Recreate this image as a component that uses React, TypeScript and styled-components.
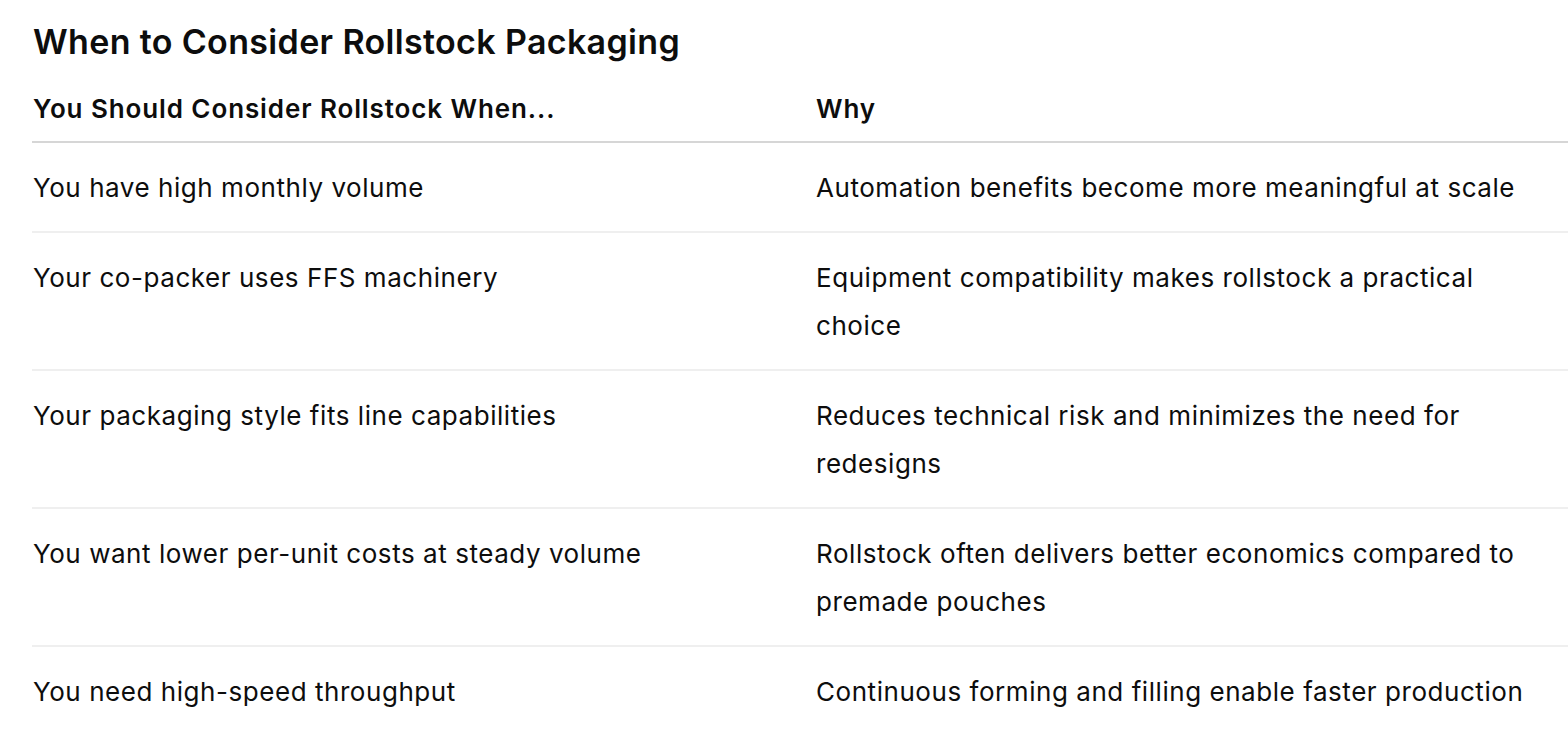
import React from "react";
import styled, { createGlobalStyle } from "styled-components";

const GlobalStyle = createGlobalStyle`
  html, body {
    margin: 0;
    padding: 0;
    background: #ffffff;
  }

  body {
    font-family: Inter, "Noto Sans", "Liberation Sans", sans-serif;
    color: #0d0d0d;
    overflow: hidden;
  }
`;

const StyledPage = styled.main`
  width: 1568px;
  height: 732px;
  overflow: hidden;
  padding: 18px 0 0 32px;
  box-sizing: border-box;
`;

const StyledTitle = styled.h2`
  margin: 0;
  padding-left: 1px;
  font-size: 34px;
  line-height: 48px;
  font-weight: 600;
  letter-spacing: 0.35px;
`;

const StyledTable = styled.table`
  width: 1600px;
  border-collapse: collapse;
  table-layout: fixed;
`;

const StyledHeadCell = styled.th<{ $width?: string }>`
  width: ${(p) => p.$width || "auto"};
  padding: 19px 0 8px 1px;
  text-align: left;
  font-size: 26px;
  line-height: 48px;
  font-weight: 600;
  letter-spacing: 0.9px;
  border-bottom: 2px solid #d6d6d6;
`;

const StyledRow = styled.tr`
  border-bottom: 2px solid #efefef;

  &:last-child {
    border-bottom: none;
  }
`;

const StyledCell = styled.td`
  padding: 21px 88px 19px 1px;
  font-size: 26px;
  line-height: 48px;
  font-weight: 400;
  letter-spacing: 0.55px;
  vertical-align: top;
`;

const rows = [
  {
    when: "You have high monthly volume",
    why: "Automation benefits become more meaningful at scale",
  },
  {
    when: "Your co-packer uses FFS machinery",
    why: "Equipment compatibility makes rollstock a practical choice",
  },
  {
    when: "Your packaging style fits line capabilities",
    why: "Reduces technical risk and minimizes the need for redesigns",
  },
  {
    when: "You want lower per-unit costs at steady volume",
    why: "Rollstock often delivers better economics compared to premade pouches",
  },
  {
    when: "You need high-speed throughput",
    why: "Continuous forming and filling enable faster production",
  },
];

const App = () => {
  return (
    <>
      <GlobalStyle />
      <StyledPage>
        <StyledTitle>When to Consider Rollstock Packaging</StyledTitle>
        <StyledTable>
          <thead>
            <tr>
              <StyledHeadCell $width="782px">
                You Should Consider Rollstock When...
              </StyledHeadCell>
              <StyledHeadCell>Why</StyledHeadCell>
            </tr>
          </thead>
          <tbody>
            {rows.map((row) => (
              <StyledRow key={row.when}>
                <StyledCell>{row.when}</StyledCell>
                <StyledCell>{row.why}</StyledCell>
              </StyledRow>
            ))}
          </tbody>
        </StyledTable>
      </StyledPage>
    </>
  );
};

export default App;
